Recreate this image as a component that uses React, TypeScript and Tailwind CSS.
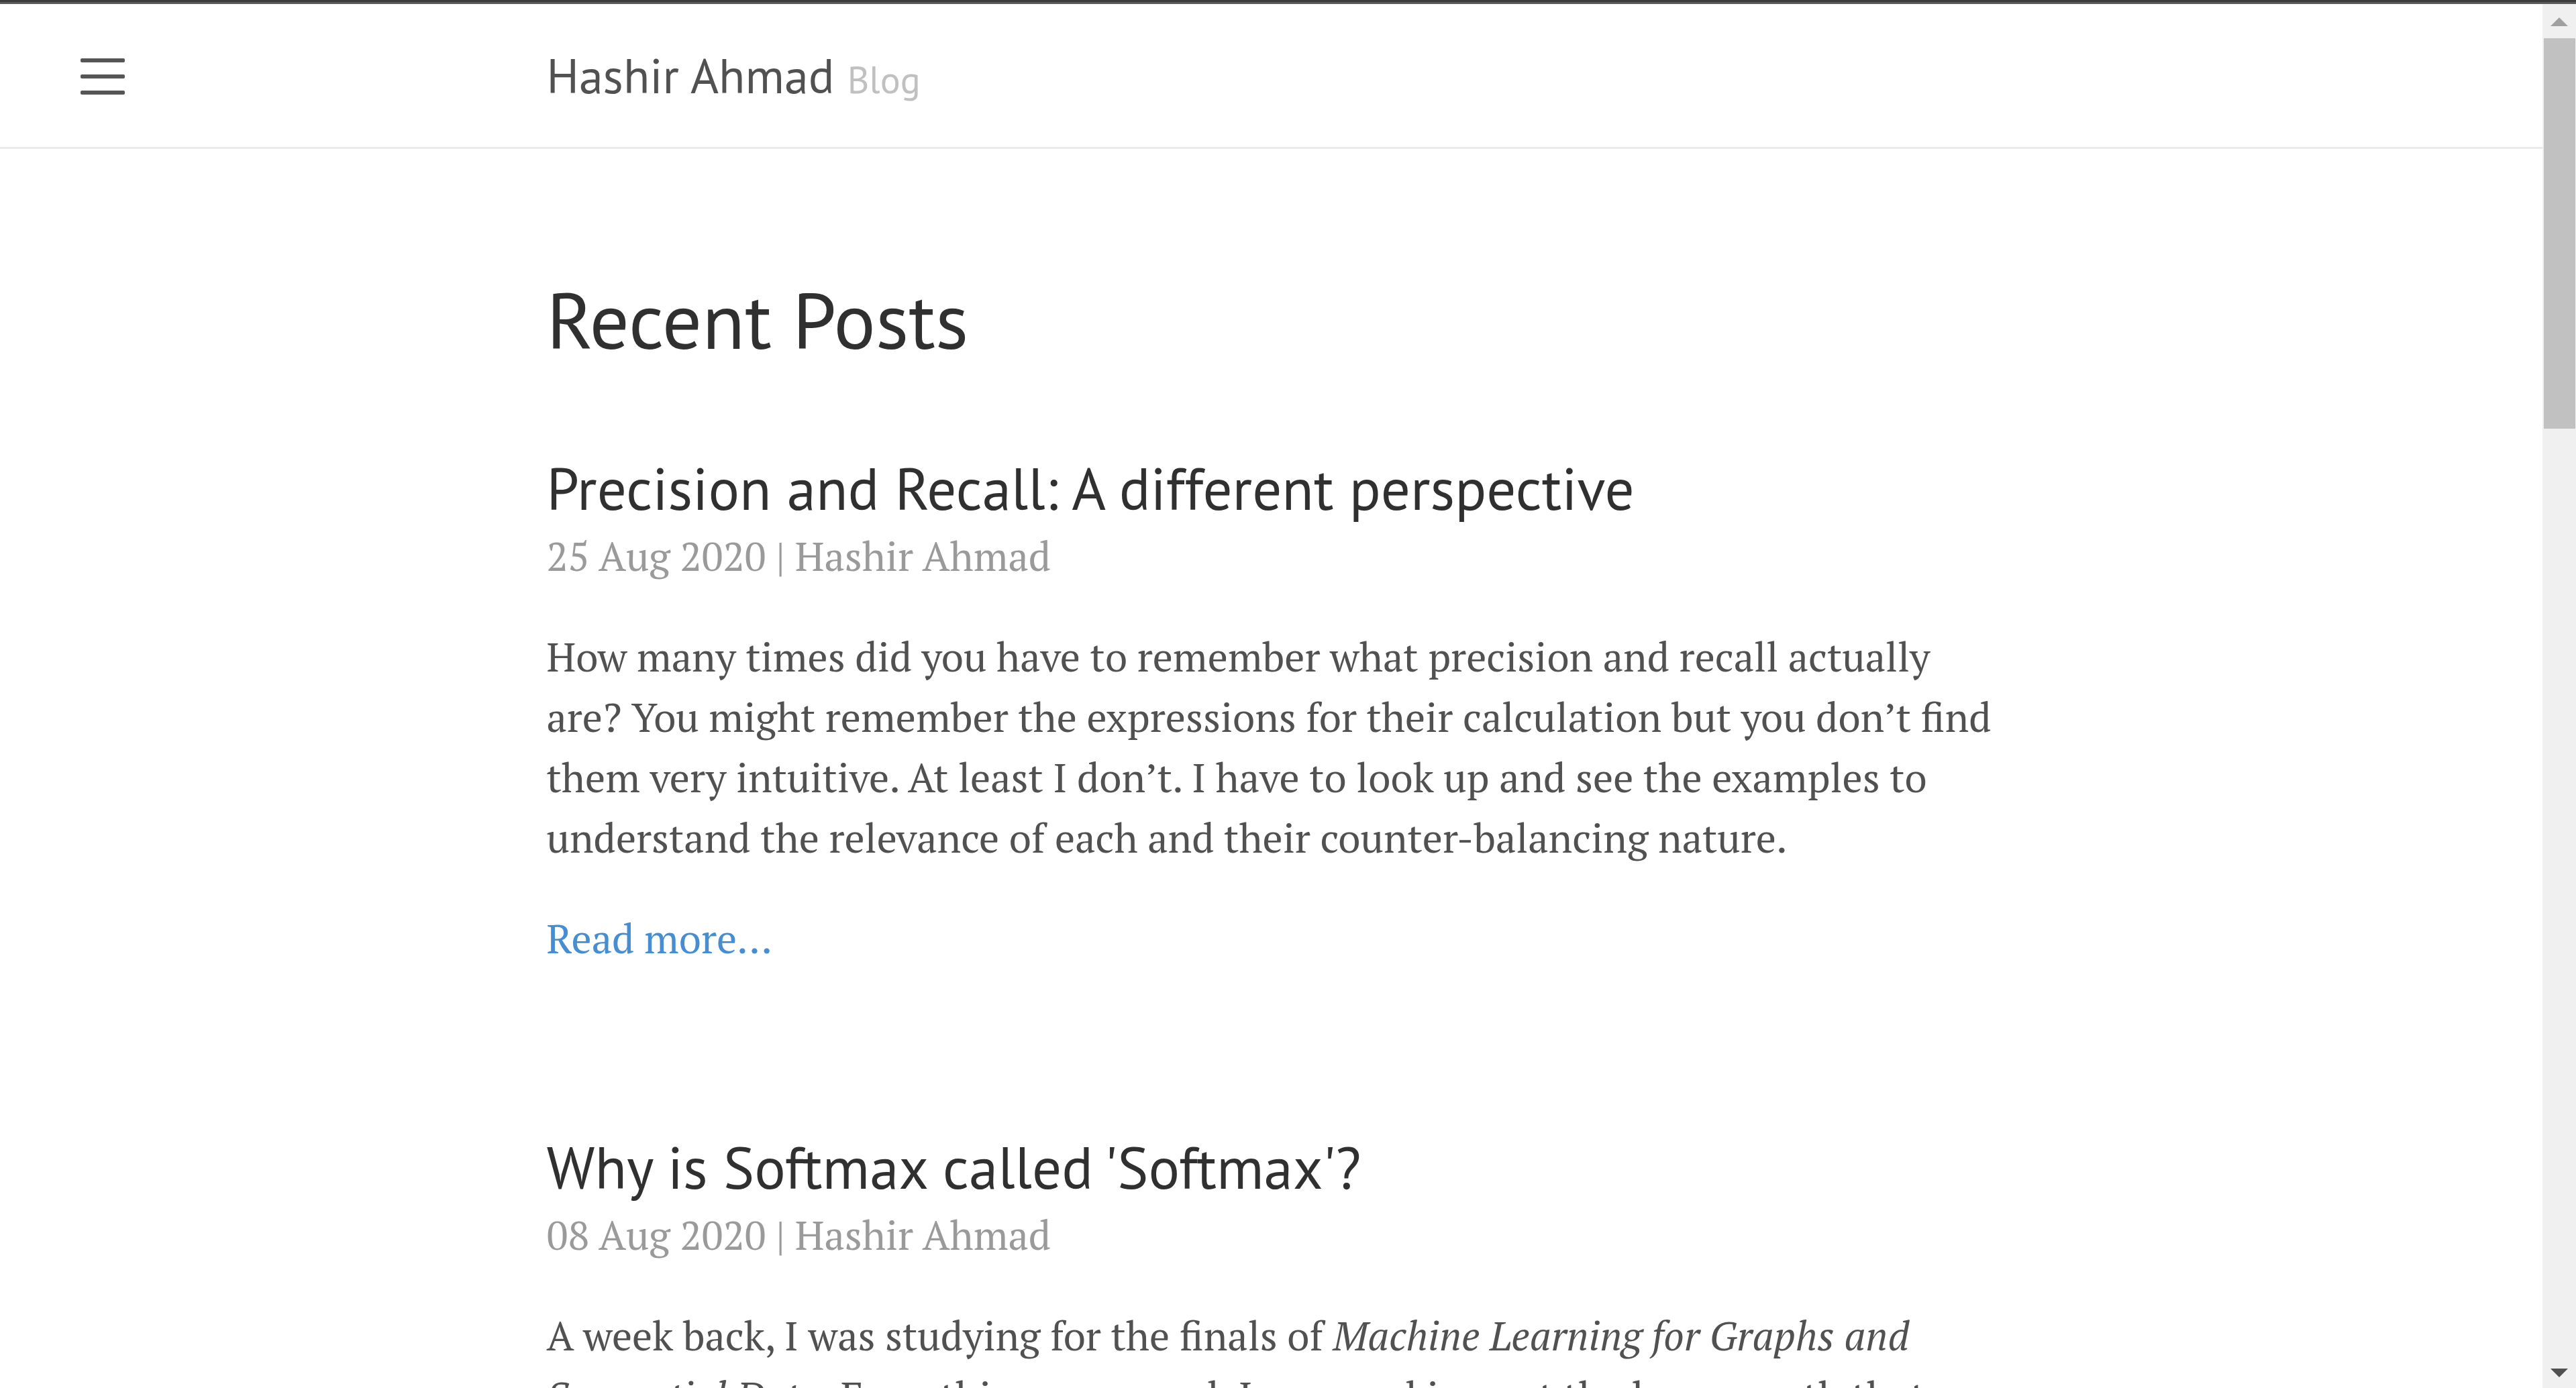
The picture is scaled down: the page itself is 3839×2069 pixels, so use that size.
import React from "react";

const sans = "font-['PT_Sans',Lato,sans-serif]";
const serif = "font-['PT_Serif','DejaVu_Serif_Condensed','DejaVu_Serif',serif]";

type PostProps = {
  title: string;
  date: string;
  children: React.ReactNode;
};

function Post({ title, date, children }: PostProps) {
  return (
    <article className="mb-[240px]">
      <h2 className={`${sans} text-[87px] leading-[112px] text-[#303030]`}>
        <a href="#post">{title}</a>
      </h2>
      <time className="mb-[60px] block text-[#9a9a9a]">{date}</time>
      {children}
    </article>
  );
}

function Scrollbar() {
  return (
    <div className="fixed inset-y-0 right-0 mt-1.5 flex w-[50px] flex-col bg-[#f0f0f0]" aria-hidden="true">
      <div className="flex h-[51px] shrink-0 items-center justify-center pt-0.5">
        <svg className="h-[13px] w-[26px]" viewBox="0 0 26 13"><path d="M0 13 13 0l13 13z" fill="#a0a0a0" /></svg>
      </div>
      <div className="mr-px ml-0.5 h-[582px] bg-[#c1c1c1]" />
      <div className="mt-auto flex h-[46px] shrink-0 items-center justify-center">
        <svg className="h-[13px] w-[26px]" viewBox="0 0 26 13"><path d="M0 0h26L13 13z" fill="#505050" /></svg>
      </div>
    </div>
  );
}

export default function App() {
  return (
    <div className={`${serif} h-screen overflow-hidden bg-white pr-[50px] text-[60px] leading-[90px] text-[#515151]`}>
      <div className="-mr-[50px] h-1.5 border-b-[3px] border-[#5a5a5a] bg-[#3b3b3b]" />
      <header className="relative border-b-[3px] border-[#ebebeb] py-[60px]">
        <button type="button" aria-label="Toggle sidebar" className="absolute top-[81px] left-[120px] flex w-[66px] flex-col gap-[18px]">
          <span className="h-1.5 w-full rounded-xs bg-[#555]" />
          <span className="h-1.5 w-full rounded-xs bg-[#555]" />
          <span className="h-1.5 w-full rounded-xs bg-[#555]" />
        </button>
        <div className="mx-auto max-w-[2280px] px-[60px]">
          <h3 className={`${sans} text-[72px] leading-[93px]`}>
            <a href="#home">Hashir Ahmad</a>{" "}
            <small className="text-[56px] leading-none text-[#c0c0c0]">Blog</small>
          </h3>
        </div>
      </header>
      <main className="mx-auto max-w-[2280px] px-[60px] pt-[180px]">
        <h1 className={`${sans} mb-[120px] text-[117px] leading-[150px] text-[#303030]`}>Recent Posts</h1>
        <Post title="Precision and Recall: A different perspective" date="25 Aug 2020 | Hashir Ahmad">
          <p className="mb-[60px]">
            How many times did you have to remember what precision and recall actually are? You might remember the
            expressions for their calculation but you don’t find them very intuitive. At least I don’t. I have to look
            up and see the examples to understand the relevance of each and their counter-balancing nature.
          </p>
          <a href="#read-more" className="block text-[#468dd2]">Read more…</a>
        </Post>
        <Post title="Why is Softmax called 'Softmax'?" date="08 Aug 2020 | Hashir Ahmad">
          <p>
            A week back, I was studying for the finals of <em>Machine Learning for Graphs and Sequential Data</em>.
            Everything was usual. I was working out the heavy math that
          </p>
        </Post>
      </main>
      <Scrollbar />
    </div>
  );
}
